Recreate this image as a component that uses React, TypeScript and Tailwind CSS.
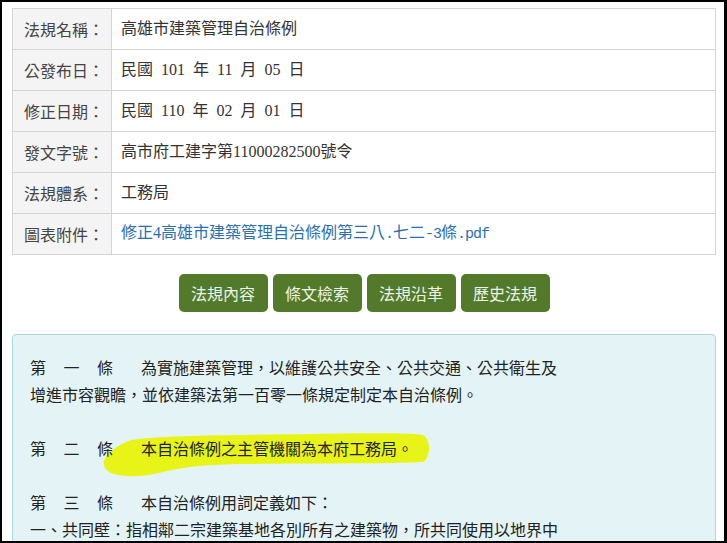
import React from 'react'

// 半形字元（MingLiU 風格的等寬英數）
const M = ({ children }: { children: React.ReactNode }) => (
  <span className="text-[15px] tracking-[-1px]" style={{ fontFamily: '"Liberation Mono", monospace' }}>
    {children}
  </span>
)

const rows: { label: string; value: React.ReactNode }[] = [
  { label: '法規名稱：', value: '高雄市建築管理自治條例' },
  { label: '公發布日：', value: '民國 101 年 11 月 05 日' },
  { label: '修正日期：', value: '民國 110 年 02 月 01 日' },
  { label: '發文字號：', value: '高市府工建字第11000282500號令' },
  { label: '法規體系：', value: '工務局' },
  {
    label: '圖表附件：',
    value: (
      <a className="text-[#2a6fb0]">
        修正4高雄市建築管理自治條例第三八<M>.</M>七二<M>-3</M>條<M>.pdf</M>
      </a>
    ),
  },
]

const tabs = ['法規內容', '條文檢索', '法規沿革', '歷史法規']

function ArticleNo({ n }: { n: string }) {
  return (
    <span className="inline-flex w-[83px] justify-between mr-[28px]">
      <span>第</span>
      <span>{n}</span>
      <span>條</span>
    </span>
  )
}

export default function App() {
  return (
    <div className="w-[727px] h-[543px] overflow-hidden bg-white border-l-2 border-t-2 border-b-2 border-r-[3px] border-black text-[#333]">
      <div className="ml-[10px] mt-[6px] w-[704px]">
        {/* 法規資訊 */}
        <table
          className="w-full border-collapse text-[16px]"
          style={{ fontFamily: '"Liberation Serif", "Noto Sans CJK TC", serif' }}
        >
          <tbody>
            {rows.map((r) => (
              <tr key={r.label} className="h-[41px]">
                <td
                  className="w-[99px] border border-[#d4d4d4] bg-[#f4f4f4] pl-[11px] text-[#444]"
                  style={{ fontFamily: '"Noto Sans CJK TC", sans-serif' }}
                >
                  {r.label}
                </td>
                <td className="border border-[#d4d4d4] pl-[9px] [word-spacing:4px]">{r.value}</td>
              </tr>
            ))}
          </tbody>
        </table>

        {/* 切換按鈕 */}
        <div
          className="flex justify-center gap-[5px] mt-[19px]"
          style={{ fontFamily: '"Noto Sans CJK TC", sans-serif' }}
        >
          {tabs.map((t) => (
            <button
              key={t}
              className="w-[89px] h-[38px] rounded-[5px] bg-[#527a2a] text-[#eef3e6] text-[16px] leading-none"
            >
              {t}
            </button>
          ))}
        </div>

        {/* 條文內容 */}
        <div
          className="relative mt-[22px] h-[260px] rounded-[4px] border border-[#a8d8df] bg-[#e4f4f6] pl-[17px] pt-[19px] text-[16px] leading-[27px] text-[#222]"
          style={{ fontFamily: '"Noto Sans CJK TC", sans-serif' }}
        >
          <svg className="absolute left-0 top-0" width="704" height="200" viewBox="0 0 704 200">
            <path
              d="M91 126 C94 117 103 111 118 105 C150 100 230 100 300 99 C360 98 400 98 410 100 C418 104 418 122 410 127 C380 129 300 128 240 129 C200 129 175 131 150 137 C130 142 112 143 98 138 C92 135 90 130 91 126 Z"
              fill="#e8f417"
            />
          </svg>
          <div className="relative">
            <div>
              <ArticleNo n="一" />
              為實施建築管理，以維護公共安全、公共交通、公共衛生及
            </div>
            <div>增進市容觀瞻，並依建築法第一百零一條規定制定本自治條例。</div>
            <div>&nbsp;</div>
            <div>
              <ArticleNo n="二" />
              本自治條例之主管機關為本府工務局。
            </div>
            <div>&nbsp;</div>
            <div>
              <ArticleNo n="三" />
              本自治條例用詞定義如下：
            </div>
            <div>一、共同壁：指相鄰二宗建築基地各別所有之建築物，所共同使用以地界中</div>
          </div>
        </div>
      </div>
    </div>
  )
}
